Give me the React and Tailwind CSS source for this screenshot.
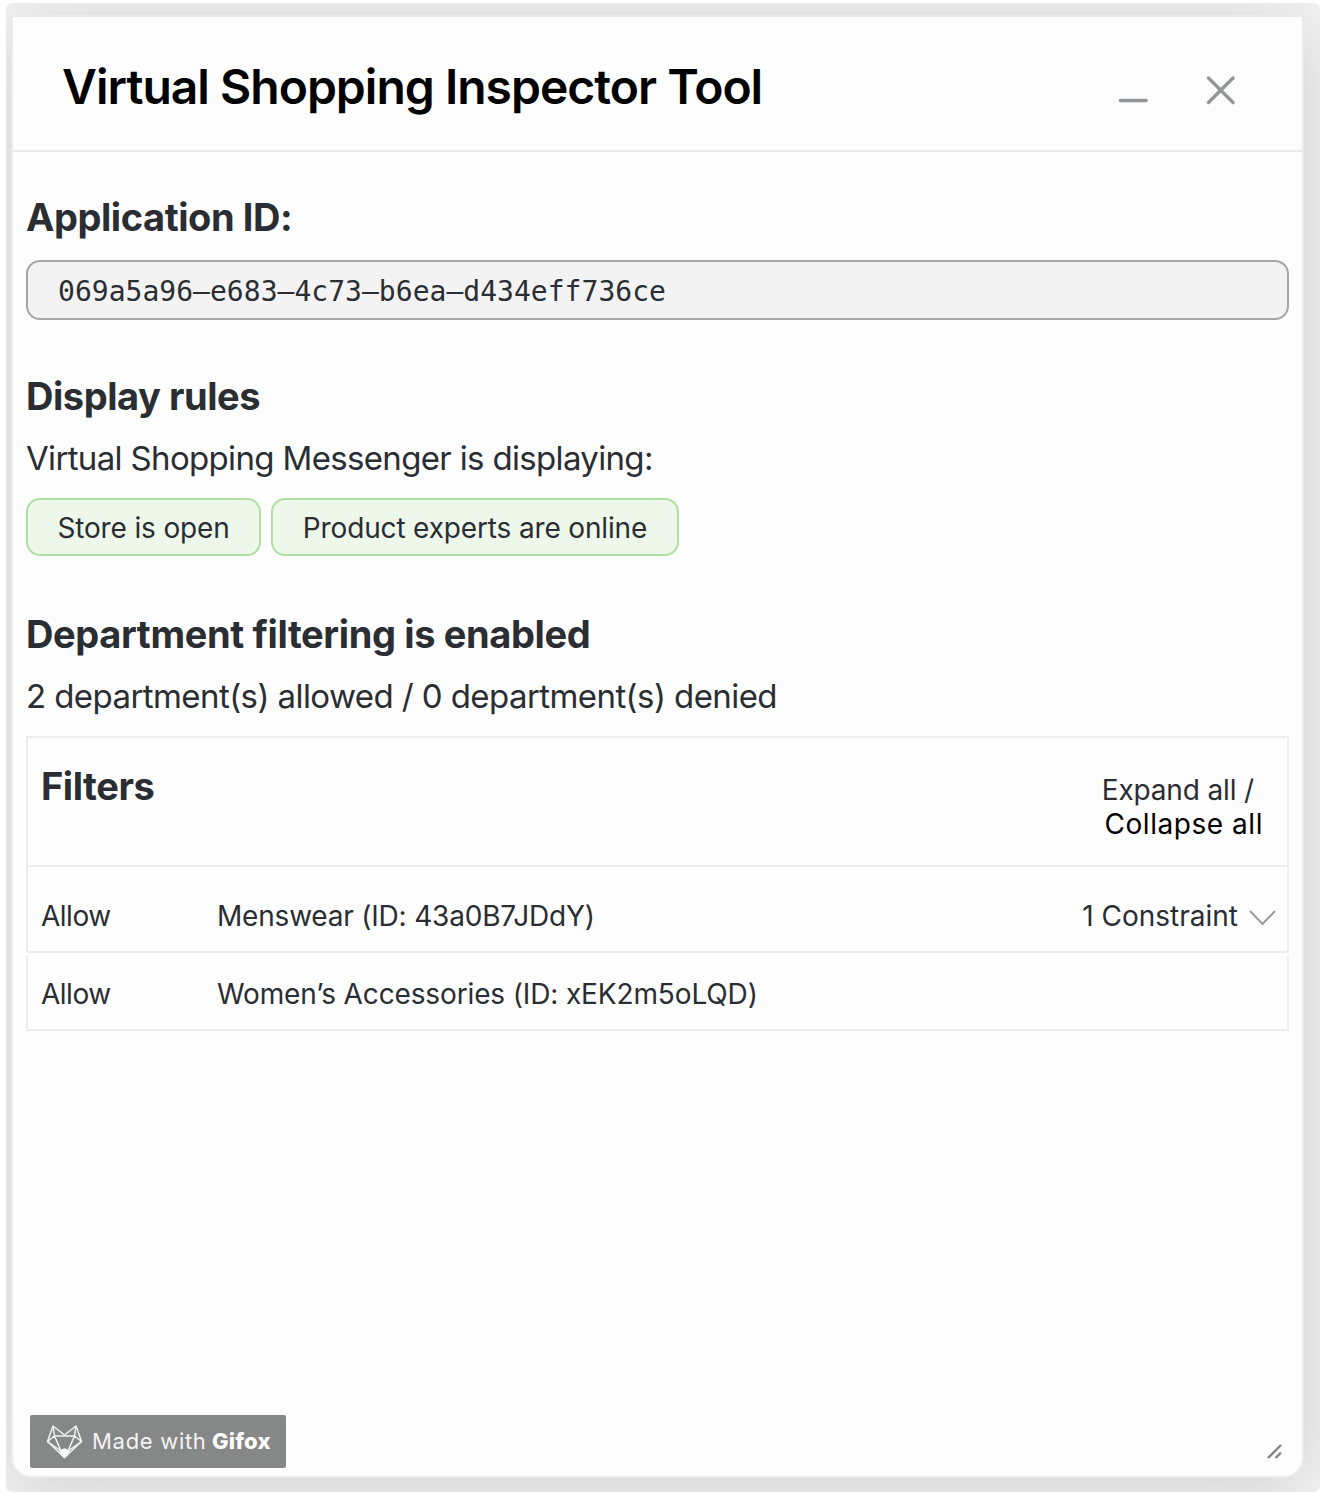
import { useState } from 'react';

const rules = [
  { label: 'Store is open', className: 'w-[235px]' },
  { label: 'Product experts are online', className: 'w-[408px]' },
];

function GifoxBadge() {
  return (
    <div className="flex h-[53px] w-[256px] items-center rounded-[2px] bg-[#868787] pl-[16px] font-[Inter] text-[22px] text-[#f4f4f4]">
      <svg width="37" height="36" viewBox="0 0 37 36" fill="none" stroke="#f2f2f2" strokeWidth="1.5" strokeLinejoin="round">
        <path d="M7 2 L1.5 17.5 L18.5 33.5 L35.5 17.5 L30 2 L18.5 11 Z" />
        <path d="M7 2 L8.5 12 H28.5 L30 2 M8.5 12 L1.5 17.5 L15 27 L8.5 12 M28.5 12 L35.5 17.5 L22 27 L28.5 12" />
        <path d="M14 27 L18.5 25 L23 27 L21.5 31 L18.5 33.5 L15.5 31 Z" fill="#fff" />
      </svg>
      <span className="ml-[9px] w-[120px] whitespace-nowrap tracking-[0.7px]">Made with</span>
      <span className="whitespace-nowrap font-extrabold tracking-[0.2px] text-white">Gifox</span>
    </div>
  );
}

export default function App() {
  const [expanded, setExpanded] = useState(false);

  return (
    <div className="h-[1494px] w-[1322px] bg-white pl-[6px] pt-[3px] font-[Inter,sans-serif] text-[#2a2d32]">
      <div className="h-[1489px] w-[1314px] overflow-hidden rounded-[6px] bg-[#f3f3f3] pl-[7px] pt-[14px]">
        <div className="flex h-[1459px] w-[1289px] flex-col rounded-b-[18px] bg-[#fdfdfd] shadow-[0_0_0_2px_#ebebeb,0_10px_80px_rgba(0,0,0,0.16)]">
          <header className="flex h-[135px] shrink-0 items-center justify-between border-b-2 border-[#ebebeb] pl-[49px] pr-[66px] pt-[7px]">
            <h1 className="whitespace-nowrap text-[48px] font-semibold leading-[60px] tracking-[-0.99px] text-black">
              Virtual Shopping Inspector Tool
            </h1>
            <div className="mt-[5px] flex items-center gap-[55px]">
              <button aria-label="Minimize">
                <svg width="32" height="32" viewBox="0 0 32 32" fill="none" stroke="#939597" strokeWidth="3.6" strokeLinecap="round">
                  <path d="M3.5 26.5 H29" />
                </svg>
              </button>
              <button aria-label="Close">
                <svg width="32" height="32" viewBox="0 0 32 32" fill="none" stroke="#939597" strokeWidth="3.4" strokeLinecap="round">
                  <path d="M4.5 4 L29 28.5 M29 4 L4.5 28.5" />
                </svg>
              </button>
            </div>
          </header>

          <main className="flex-1 px-[13px] pt-[41px]">
            <h2 className="text-[38px] font-bold leading-[48px] tracking-[-0.43px]">Application ID:</h2>
            <div className="mt-[19px] flex h-[60px] items-center rounded-[14px] border-2 border-[#a5a6a6] bg-[#f3f3f3] pl-[30px] pt-[3px] font-['DejaVu_Sans_Mono',monospace] text-[28px] tracking-[0.03px]">
              069a5a96–e683–4c73–b6ea–d434eff736ce
            </div>

            <h2 className="mt-[52px] text-[38px] font-bold leading-[48px] tracking-[-0.45px]">Display rules</h2>
            <p className="mt-[16px] text-[33px] leading-[44px] tracking-[-0.66px]">Virtual Shopping Messenger is displaying:</p>
            <div className="mt-[18px] flex gap-[10px]">
              {rules.map((rule) => (
                <div
                  key={rule.label}
                  className={`flex h-[58px] items-center justify-center whitespace-nowrap rounded-[14px] border-2 border-[#aee0a2] bg-[#eef8ea] pt-[2px] text-[28px] tracking-[-0.15px] ${rule.className}`}
                >
                  {rule.label}
                </div>
              ))}
            </div>

            <h2 className="mt-[54px] text-[38px] font-bold leading-[48px] tracking-[-0.37px]">
              Department filtering is enabled
            </h2>
            <p className="mt-[16px] text-[33px] leading-[44px] tracking-[-0.58px]">
              2 department(s) allowed / 0 department(s) denied
            </p>

            <section className="mt-[18px] text-[28px] leading-[34px]">
              <div className="flex h-[131px] justify-between border-2 border-[#ededed] pl-[13px] pr-[24px]">
                <h3 className="mt-[24px] text-[38px] font-bold leading-[48px] tracking-[-0.45px]">Filters</h3>
                <div className="mt-[35px] flex flex-col items-end">
                  <button className="mr-[9px] tracking-[-0.15px]" onClick={() => setExpanded(true)}>
                    Expand all /
                  </button>
                  <button className="tracking-[0.55px] text-black" onClick={() => setExpanded(false)}>
                    Collapse all
                  </button>
                </div>
              </div>
              <div className="flex h-[86px] border-x-2 border-b-2 border-[#ededed] pl-[13px] pr-[11px] pt-[32px]">
                <span className="w-[176px] tracking-[-0.5px]">Allow</span>
                <span className="tracking-[-0.2px]">Menswear (ID: 43a0B7JDdY)</span>
                <button className="ml-auto flex items-start gap-[11px]" onClick={() => setExpanded(!expanded)}>
                  1 Constraint
                  <svg className="mt-[11px]" width="27" height="16" viewBox="0 0 27 16" fill="none" stroke="#9a9b9c" strokeWidth="2">
                    <path d="M1 1 L13.5 14 L26 1" />
                  </svg>
                </button>
              </div>
              <div className="mt-[3px] flex h-[75px] border-x-2 border-b-2 border-[#ededed] pl-[13px] pt-[21px]">
                <span className="w-[176px] tracking-[-0.5px]">Allow</span>
                <span className="tracking-[-0.13px]">Women’s Accessories (ID: xEK2m5oLQD)</span>
              </div>
            </section>
          </main>

          <footer className="flex items-end justify-between pb-[8px] pl-[17px] pr-[20px]">
            <GifoxBadge />
            <svg className="mb-[9px]" width="15" height="15" viewBox="0 0 15 15" fill="none" stroke="#858585" strokeWidth="2.4">
              <path d="M1 14 L14 1 M8.5 14 L14 8.5" />
            </svg>
          </footer>
        </div>
      </div>
    </div>
  );
}
